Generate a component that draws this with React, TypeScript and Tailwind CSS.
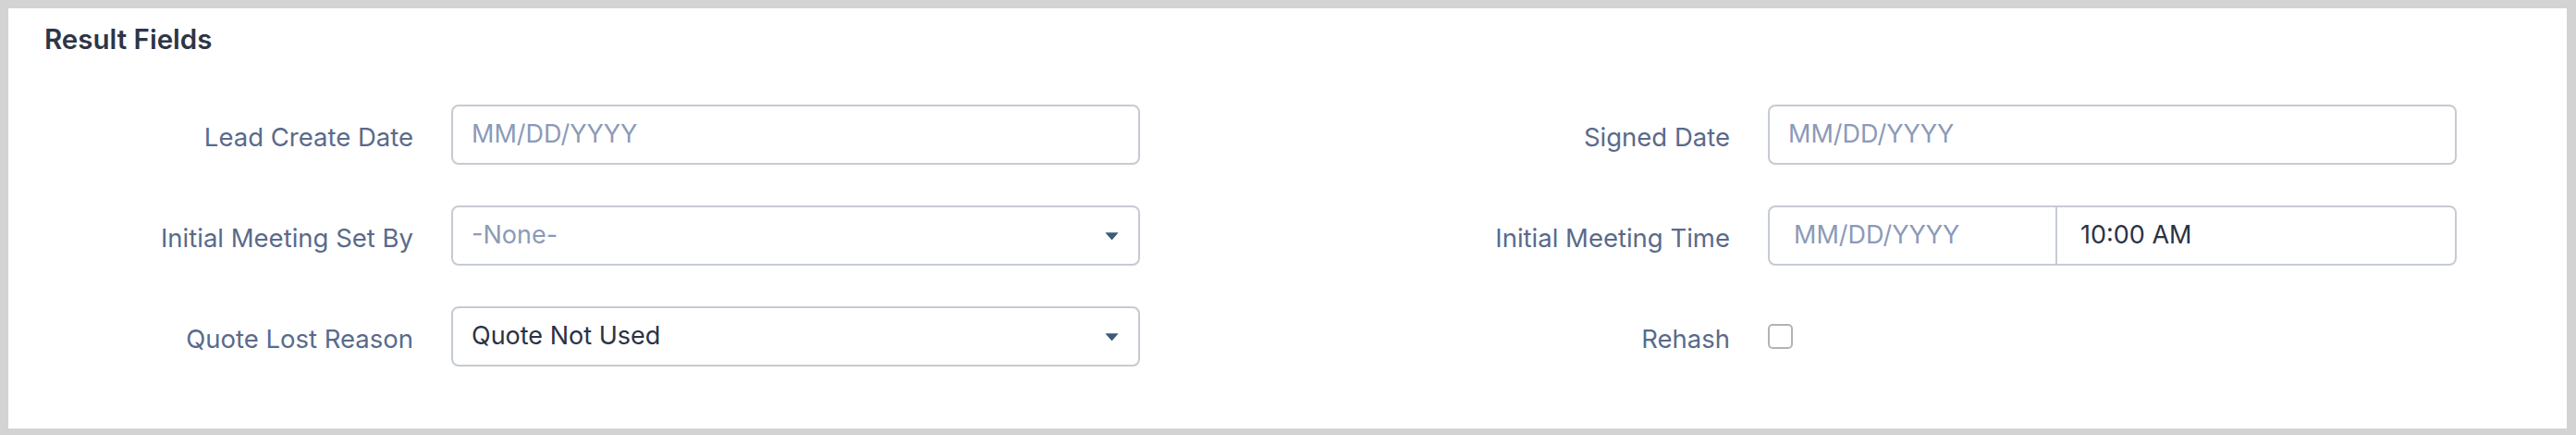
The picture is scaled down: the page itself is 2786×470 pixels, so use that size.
import React from "react";

const font = { fontFamily: "Inter, 'Noto Sans', sans-serif" };

function Caret() {
  return (
    <svg width="15" height="10" viewBox="0 0 15 10" className="shrink-0">
      <path d="M1 1.2 L14 1.2 Q14.6 1.2 14.2 1.8 L8.1 8.8 Q7.5 9.4 6.9 8.8 L0.8 1.8 Q0.4 1.2 1 1.2 Z" fill="#3d5b79" />
    </svg>
  );
}

function Label({ children }: { children: React.ReactNode }) {
  return (
    <div className="w-[440px] shrink-0 pr-[41px] pt-[7px] text-right text-[27.5px] leading-none text-[#5a6a8a]">
      {children}
    </div>
  );
}

function Box({ children }: { children: React.ReactNode }) {
  return (
    <div className="flex h-[65px] w-[745px] shrink-0 items-center rounded-[8px] border-2 border-[#c6cbd2] bg-white">
      {children}
    </div>
  );
}

function DateInput() {
  return (
    <Box>
      <span className="pl-[20px] text-[27px] text-[#8b9ab8]">MM/DD/YYYY</span>
    </Box>
  );
}

function SelectInput({ value, placeholder }: { value: string; placeholder?: boolean }) {
  return (
    <Box>
      <span className={"flex-1 pl-[20px] text-[27px] " + (placeholder ? "text-[#8b9ab8]" : "text-[#2b3243]")}>{value}</span>
      <span className="pr-[21px]"><Caret /></span>
    </Box>
  );
}

function DateTimeInput() {
  return (
    <Box>
      <div className="flex h-full w-[311px] items-center border-r-2 border-[#c6cbd2] pl-[26px] text-[27px] text-[#8b9ab8]">
        MM/DD/YYYY
      </div>
      <div className="pl-[25px] text-[27px] text-[#2b3243]">10:00 AM</div>
    </Box>
  );
}

function Field({ label, children }: { label: string; children: React.ReactNode }) {
  return (
    <div className="flex items-center">
      <Label>{label}</Label>
      {children}
    </div>
  );
}

export default function App() {
  return (
    <div className="h-[470px] w-[2786px] bg-[#d3d3d3] pt-[9px] pl-[9px] pr-[10px] pb-[7px]" style={font}>
      <div className="h-full w-full bg-white pl-[39px] pt-[17px]">
        <div className="text-[29.5px] font-semibold leading-[33px] text-[#2e3545]">Result Fields</div>
        <div className="mt-[54px] flex flex-col gap-[44px]">
          <div className="flex gap-[239px]">
            <Field label="Lead Create Date"><DateInput /></Field>
            <Field label="Signed Date"><DateInput /></Field>
          </div>
          <div className="flex gap-[239px]">
            <Field label="Initial Meeting Set By"><SelectInput value="-None-" placeholder /></Field>
            <Field label="Initial Meeting Time"><DateTimeInput /></Field>
          </div>
          <div className="flex gap-[239px]">
            <Field label="Quote Lost Reason"><SelectInput value="Quote Not Used" /></Field>
            <Field label="Rehash">
              <div className="flex h-[65px] w-[745px] items-center">
                <div className="h-[27px] w-[27px] rounded-[5px] border-2 border-[#b3b3b3] bg-white" />
              </div>
            </Field>
          </div>
        </div>
      </div>
    </div>
  );
}
